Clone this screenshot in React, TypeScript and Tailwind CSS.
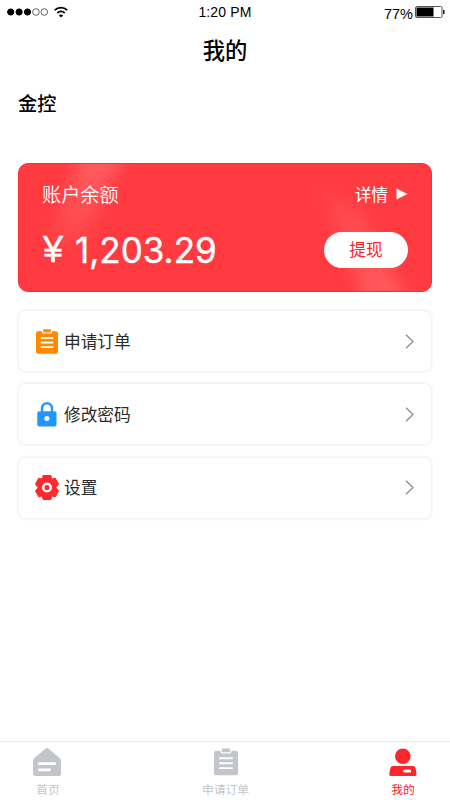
import type { ReactNode } from "react";

function WifiIcon() {
	return (
		<svg width="14" height="12" viewBox="0 0 14 12" fill="none" stroke="#000" strokeWidth="1.7">
			<path d="M0.7 4.2C4.3 0.7 9.7 0.7 13.3 4.2" />
			<path d="M3.3 7C5.5 5 8.5 5 10.7 7" />
			<path d="M7 11.6L4.9 9.4C6.1 8.3 7.9 8.3 9.1 9.4Z" fill="#000" stroke="none" />
		</svg>
	);
}

function BatteryIcon() {
	return (
		<svg width="30" height="12" viewBox="0 0 30 12">
			<rect x="0.5" y="0.5" width="26.5" height="11" rx="1.5" fill="#fff" stroke="#555" />
			<rect x="1.5" y="1.5" width="17" height="9" fill="#000" />
			<path d="M28 3.8h0.7a1 1 0 0 1 1 1v2.4a1 1 0 0 1-1 1H28z" fill="#333" />
		</svg>
	);
}

function ClipboardIcon({ width, height }: { width: number; height: number }) {
	return (
		<svg width={width} height={height} viewBox="0 0 22 25" fill="currentColor">
			<path d="M2 2.3H6V3.2Q6 4.6 7.4 4.6H14.6Q16 4.6 16 3.2V2.3H20Q22 2.3 22 4.3V22.7Q22 24.7 20 24.7H2Q0 24.7 0 22.7V4.3Q0 2.3 2 2.3Z" />
			<rect x="7.2" y="0.2" width="7.6" height="3.3" rx="0.5" />
			<path d="M4.8 9.1H17.2M4.8 13.6H17.2M4.8 18.1H17.2" stroke="#fff" strokeWidth="1.7" />
		</svg>
	);
}

function LockIcon() {
	return (
		<svg width="20" height="25" viewBox="0 0 20 25">
			<path d="M5 11V6.2a5 5 0 0 1 10 0V11" fill="none" stroke="#2296ff" strokeWidth="2.4" />
			<rect x="0.3" y="9.2" width="19.2" height="15.4" rx="2" fill="#2296ff" />
			<circle cx="9.9" cy="16.6" r="2.5" fill="#fff" />
		</svg>
	);
}

function GearIcon() {
	return (
		<svg width="24" height="25" viewBox="0 0 24 25">
			<path
				d="M8.2 0.5H15.8L16.8 4.1L20.3 3.2L23.5 9L20.9 12.5L23.5 16L20.3 21.8L16.8 20.9L15.8 24.5H8.2L7.2 20.9L3.7 21.8L0.5 16L3.1 12.5L0.5 9L3.7 3.2L7.2 4.1Z"
				fill="#ff282d"
				stroke="#ff282d"
				strokeLinejoin="round"
			/>
			<circle cx="12" cy="12.5" r="3.8" fill="#ff282d" stroke="#fff" strokeWidth="2.5" />
		</svg>
	);
}

function HomeIcon() {
	return (
		<svg width="28" height="28" viewBox="0 0 28 28" className="mr-0.5">
			<path
				d="M12.6 0.6Q14 -0.4 15.4 0.6L26.8 10.2Q28 11.3 28 12.8V25.2Q28 28 25.2 28H2.8Q0 28 0 25.2V12.8Q0 11.3 1.2 10.2Z"
				fill="#c2c5cb"
			/>
			<path d="M6.3 15.7H21.7M6.3 21.9H16.5" stroke="#fff" strokeWidth="2.8" strokeLinecap="round" />
		</svg>
	);
}

function UserIcon() {
	return (
		<svg width="28" height="28" viewBox="0 0 28 28">
			<circle cx="13.8" cy="8.3" r="7.8" fill="#fa252d" />
			<path d="M4 17.9H24Q26 17.9 26.6 19.9L27.6 26Q28 28 26 28H2Q0 28 0.2 26L1.4 19.9Q2 17.9 4 17.9Z" fill="#fa252d" />
			<rect x="14.2" y="21.4" width="8" height="3.2" rx="1.6" fill="#fff" />
		</svg>
	);
}

function StatusBar() {
	return (
		<div className="grid h-6 grid-cols-3 items-center">
			<div className="flex items-center gap-[5px] pl-[7px]">
				<svg width="42" height="8" viewBox="0 0 42 8" stroke="#000">
					{[0, 1, 2, 3, 4].map((i) => (
						<circle
							key={i}
							cx={3.7 + i * 8.4}
							cy="4"
							r={i < 3 ? 3.1 : 3.3}
							fill={i < 3 ? "#000" : "none"}
							strokeWidth={i < 3 ? 1 : 0.6}
						/>
					))}
				</svg>
				<WifiIcon />
			</div>
			<span className="text-center text-[14px] leading-6 tracking-[0.15px]">1:20 PM</span>
			<div className="flex items-center justify-end gap-[2px] pr-[5px]">
				<span className="pt-1 text-[14.5px] leading-5">77%</span>
				<BatteryIcon />
			</div>
		</div>
	);
}

function BalanceCard() {
	return (
		<section className="relative h-[129px] overflow-hidden rounded-[10px] border border-[#ff2c33] bg-[#ff3a40] text-white">
			{/* light streaks behind the balance */}
			<svg className="absolute inset-0" width="412" height="127" viewBox="0 0 412 127">
				<defs>
					<linearGradient id="streakLeft" x1="0" y1="0" x2="0" y2="1">
						<stop offset="0" stopColor="#fff" stopOpacity="0.2" />
						<stop offset="1" stopColor="#fff" stopOpacity="0.05" />
					</linearGradient>
					<linearGradient id="streakRight" x1="0" y1="0" x2="0" y2="1">
						<stop offset="0" stopColor="#fff" stopOpacity="0.05" />
						<stop offset="1" stopColor="#fff" stopOpacity="0.18" />
					</linearGradient>
					<filter id="soften" x="-50%" y="-50%" width="200%" height="200%">
						<feGaussianBlur stdDeviation="8" />
					</filter>
				</defs>
				<path d="M66 -20H110L64 80H28Z" fill="url(#streakLeft)" filter="url(#soften)" />
				<path d="M300 22L343 46L394 147H350Z" fill="url(#streakRight)" filter="url(#soften)" />
			</svg>
			<div className="relative flex h-full flex-col px-[23px] pt-[17px]">
				<div className="flex items-center justify-between">
					<h2 className="pt-px text-[19.2px] leading-7 font-[350]">账户余额</h2>
					<button className="flex items-center gap-2 text-[16.7px] leading-7">
						详情
						<svg width="12" height="12" viewBox="0 0 12 12" className="-mt-1">
							<path d="M0.5 0.5L11.5 6L0.5 11.5Z" fill="#fff" />
						</svg>
					</button>
				</div>
				<div className="mt-[22px] flex items-center justify-between">
					<p className="flex gap-[12px] text-[35px] leading-9">
						<span className="pl-[1px] text-[36px] [-webkit-text-stroke:0.5px_#fff]">¥</span>
						<span className="font-['Inter','Liberation_Sans',sans-serif] [-webkit-text-stroke:0.4px_#fff]">1,203.29</span>
					</p>
					<button className="h-9 w-[84px] rounded-full bg-white text-[16.7px] leading-[37px] text-[#fa252d]">提现</button>
				</div>
			</div>
		</section>
	);
}

function MenuItem({ icon, label }: { icon: ReactNode; label: string }) {
	return (
		<button className="flex h-[62px] w-full items-center rounded-lg border border-[#f4f4f4] bg-white pr-[17px] pl-4 shadow-[0_0_3px_rgba(0,0,0,0.07)]">
			<span className="flex w-6 justify-center">{icon}</span>
			<span className="ml-[5px] pt-[3px] text-[16.7px] leading-6 text-[#2b2b2b]">{label}</span>
			<svg className="ml-auto" width="9" height="15" viewBox="0 0 9 15" fill="none" stroke="#888" strokeWidth="1.2">
				<path d="M1 0.8L8 7.5L1 14.2" />
			</svg>
		</button>
	);
}

function TabItem({ icon, label, active = false }: { icon: ReactNode; label: string; active?: boolean }) {
	return (
		<button className={`flex w-14 flex-col items-center ${active ? "text-[#fa252d]" : "text-[#c2c5cb]"}`}>
			<span className="flex h-7 items-center">{icon}</span>
			<span className="mt-[5px] text-[11.8px] leading-[18px]">{label}</span>
		</button>
	);
}

export default function App() {
	return (
		<div className="flex h-[800px] w-[450px] flex-col bg-white font-['Liberation_Sans','Noto_Sans_CJK_SC',sans-serif] text-black">
			<StatusBar />
			<h1 className="mt-[12px] text-center text-[22.3px] leading-8 font-medium">我的</h1>
			<main className="flex flex-1 flex-col px-[18px]">
				<p className="mt-[23px] text-[19.2px] leading-7 font-medium">金控</p>
				<div className="mt-[44px]">
					<BalanceCard />
				</div>
				<div className="mt-[18px] flex flex-col gap-[11.3px]">
					<MenuItem icon={<span className="text-[#ff8a00]"><ClipboardIcon width={22} height={25} /></span>} label="申请订单" />
					<MenuItem icon={<LockIcon />} label="修改密码" />
					<MenuItem icon={<GearIcon />} label="设置" />
				</div>
			</main>
			<nav className="flex h-[59px] justify-between border-t border-[#e8e8e8] pt-[6px] pr-[19px] pl-[20px]">
				<TabItem icon={<HomeIcon />} label="首页" />
				<TabItem icon={<ClipboardIcon width={24} height={28} />} label="申请订单" />
				<TabItem icon={<UserIcon />} label="我的" active />
			</nav>
		</div>
	);
}
